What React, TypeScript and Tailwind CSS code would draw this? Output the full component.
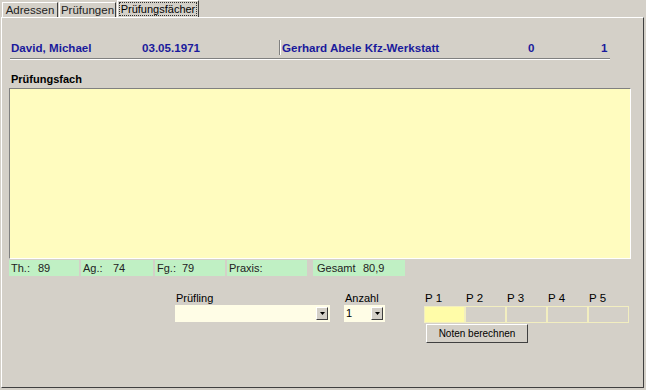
import React from "react";

const font = { fontFamily: '"Liberation Sans", Arial, sans-serif' };

function Arrow() {
  return (
    <div className="w-[12px] h-[13px] bg-[#d4d0c8] border-t border-l border-t-white border-l-white border-r border-b border-r-[#404040] border-b-[#404040] flex items-center justify-center">
      <svg width="5" height="3" viewBox="0 0 5 3">
        <path d="M0 0H5L2.5 3Z" fill="#000" />
      </svg>
    </div>
  );
}

export default function App() {
  return (
    <div className="w-[646px] h-[390px] bg-[#d4d0c8] text-[11px] text-black leading-[13px]" style={font}>
      {/* Tabs */}
      <div className="flex items-end h-[17px] pl-[2px]">
        <div className="h-[15px] w-[56px] border-t border-l border-t-white border-l-white border-r border-r-[#404040] flex items-center justify-center text-[#222] text-[11.5px]">Adressen</div>
        <div className="h-[15px] w-[57px] ml-[1px] border-t border-l border-t-white border-l-white border-r border-r-[#404040] flex items-center justify-center text-[#222] text-[11.5px]">Prüfungen</div>
        <div className="h-[17px] w-[82px] ml-[1px] border-t border-l border-t-white border-l-white border-r border-r-[#404040] flex items-center justify-center">
          <span className="border border-dotted border-[#333] px-[1px] leading-[12px]">Prüfungsfächer</span>
        </div>
      </div>
      {/* Panel */}
      <div className="ml-[1px] w-[643px] h-[371px] border-t border-l border-t-white border-l-white border-r border-b border-r-[#404040] border-b-[#404040] pl-[7px] flex flex-col">
        <div className="mt-[22px] h-[15px] flex items-center font-bold text-[#1a1a9c] text-[11.6px]">
          <span className="ml-[2px] w-[131px]">David, Michael</span>
          <span className="w-[137px]">03.05.1971</span>
          <div className="w-[2px] h-[15px] border-l border-l-[#808080] border-r border-r-white" />
          <span className="ml-[1px] w-[246px]">Gerhard Abele Kfz-Werkstatt</span>
          <span className="w-[73px]">0</span>
          <span>1</span>
        </div>
        <div className="mt-[3px] ml-[1px] w-[600px] h-[2px] border-t border-t-[#808080] border-b border-b-white" />
        <div className="mt-[13px] ml-[2px] font-bold h-[13px]">Prüfungsfach</div>
        <div className="mt-[2px] w-[622px] h-[171px] bg-[#fffcbf] border border-t-[#808080] border-l-[#808080] border-r-white border-b-white" />
        <div className="mt-[1px] flex h-[16px] text-[#222]">
          <div className="w-[70px] bg-[#c0f0c4] flex items-center pl-[2px]"><span className="w-[27px]">Th.:</span>89</div>
          <div className="ml-[2px] w-[72px] bg-[#c0f0c4] flex items-center pl-[2px]"><span className="w-[30px]">Ag.:</span>74</div>
          <div className="ml-[2px] w-[70px] bg-[#c0f0c4] flex items-center pl-[2px]"><span className="w-[25px]">Fg.:</span>79</div>
          <div className="ml-[2px] w-[80px] bg-[#c0f0c4] flex items-center pl-[2px]">Praxis:</div>
          <div className="ml-[6px] w-[92px] bg-[#c0f0c4] flex items-center pl-[4px]"><span className="w-[46px]">Gesamt</span>80,9</div>
        </div>
        <div className="mt-[16px] flex">
          <div className="ml-[166px] flex flex-col">
            <div className="ml-[1px] h-[13px]">Prüfling</div>
            <div className="w-[155px] h-[17px] bg-[#fffde6] flex items-center justify-end pr-[2px]">
              <Arrow />
            </div>
          </div>
          <div className="ml-[14px] flex flex-col">
            <div className="ml-[1px] h-[13px]">Anzahl</div>
            <div className="w-[41px] h-[17px] bg-[#fffde6] flex items-center justify-between pr-[2px] pl-[2px]">
              <span>1</span>
              <Arrow />
            </div>
          </div>
          <div className="ml-[39px] flex flex-col">
            <div className="flex h-[13px] text-[11.5px]">
              {["P 1", "P 2", "P 3", "P 4", "P 5"].map((p) => (
                <div key={p} className="w-[41px] pl-[1px]">{p}</div>
              ))}
            </div>
            <div className="flex h-[17px] mt-[1px]">
              <div className="w-[41px] h-[17px] bg-[#fffca8] border border-[#f2eec0]" />
              <div className="w-[41px] h-[17px] border border-[#f2eec0]" />
              <div className="w-[41px] h-[17px] border border-[#f2eec0]" />
              <div className="w-[41px] h-[17px] border border-[#f2eec0]" />
              <div className="w-[41px] h-[17px] border border-[#f2eec0]" />
            </div>
            <div className="mt-[1px] ml-[2px] w-[102px] h-[19px] bg-[#d4d0c8] border border-t-white border-l-white border-r-[#404040] border-b-[#404040] flex items-center justify-center text-[10px]">
              Noten berechnen
            </div>
          </div>
        </div>
      </div>
    </div>
  );
}
